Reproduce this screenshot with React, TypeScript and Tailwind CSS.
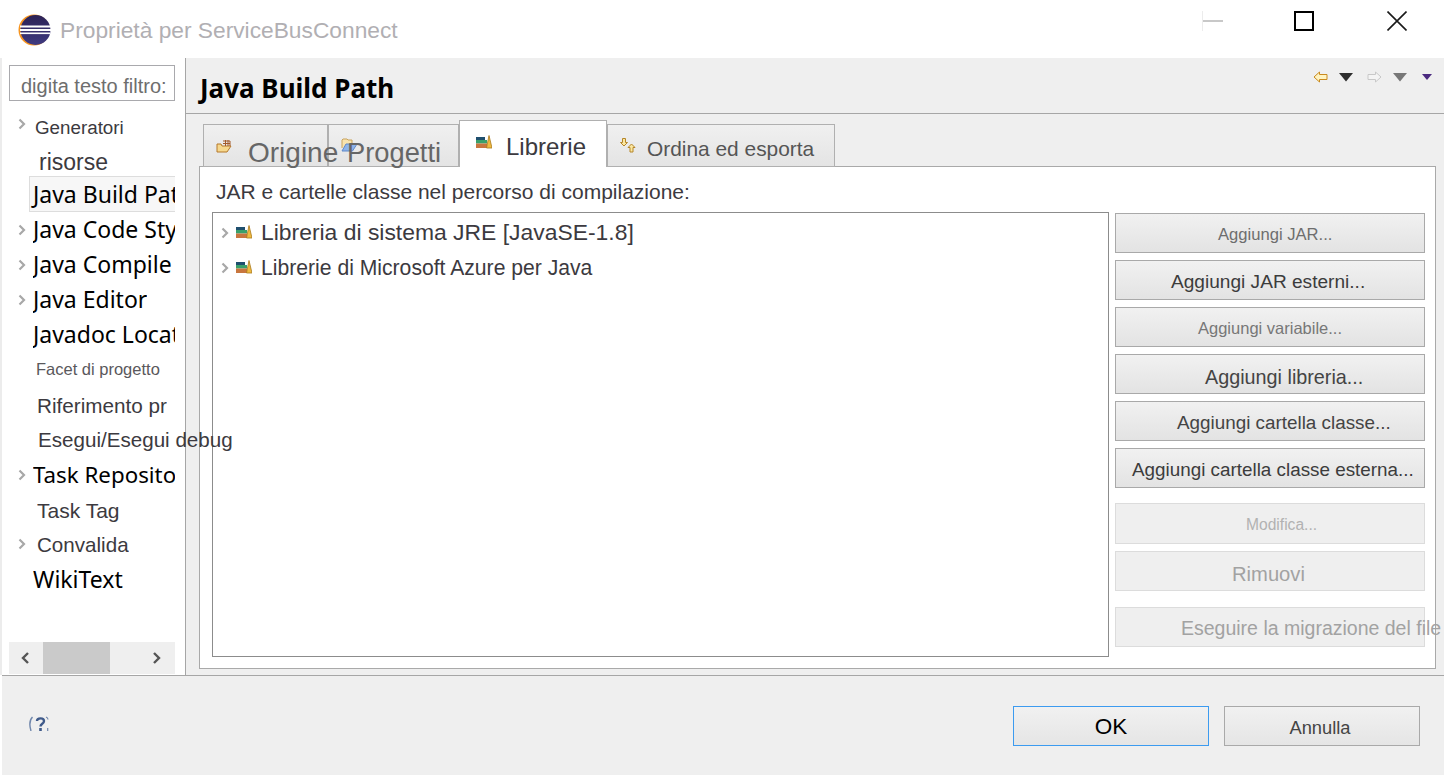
import React from 'react';

const arial = "font-['Liberation_Sans',Arial,sans-serif]";
const segoe = "font-['Noto_Sans','Open_Sans',sans-serif]";

function Chevron({ className = '' }: { className?: string }) {
  return (
    <svg width="8" height="12" viewBox="0 0 8 12" className={className}>
      <path d="M1.5 1.5 L6 6 L1.5 10.5" fill="none" stroke="#a8a8a8" strokeWidth="2.2" />
    </svg>
  );
}

function BooksIcon() {
  return (
    <svg width="16" height="14" viewBox="0 0 16 14">
      <rect x="0" y="2" width="9" height="3" fill="#1f4f6e" />
      <rect x="0" y="5" width="11" height="3.5" fill="#3aa06a" />
      <rect x="0" y="8.5" width="11" height="4.5" fill="#c8763e" />
      <path d="M10.5 13 L13 0.5 L16 13 Z" fill="#f0bb3f" stroke="#a9781c" strokeWidth="0.8" />
    </svg>
  );
}

function SourceFolderIcon() {
  return (
    <svg width="16" height="13" viewBox="0 0 16 13">
      <path d="M1 4 L1 12 L11 12 L15 6 L6 6 L5 4 Z" fill="#f6d88e" stroke="#b5792a" strokeWidth="1" />
      <path d="M7 1 H14 V6 M9.5 0 V6 M12 0 V6 M7 3.5 H14" fill="none" stroke="#a35a2a" strokeWidth="1" />
    </svg>
  );
}

function ProjectIcon() {
  return (
    <svg width="16" height="14" viewBox="0 0 16 14">
      <path d="M1 10 V2 L2 1 H6 L7 2 H11 V5" fill="#f8e3ae" stroke="#c9a35c" strokeWidth="1" />
      <path d="M1 13 L5 6 H16 L11.5 13 Z" fill="#8fb4ea" stroke="#5f88c9" strokeWidth="1" />
    </svg>
  );
}

function OrderIcon() {
  return (
    <svg width="16" height="15" viewBox="0 0 16 15">
      <path d="M2.5 0.5 H5.5 V4.5 H7.5 L4 8 L0.5 4.5 H2.5 Z" fill="#fbe7a1" stroke="#b5862a" strokeWidth="1" />
      <path d="M11.5 6 L15 9.5 H13 V14 H10 V9.5 H8 Z" fill="#fbe7a1" stroke="#b5862a" strokeWidth="1" />
    </svg>
  );
}

function HelpIcon() {
  return (
    <svg width="20" height="15" viewBox="0 0 20 15">
      <path d="M3.5 1 C0.5 4 0.5 10 2 15" fill="none" stroke="#6f86ab" strokeWidth="1.4" />
      <path d="M17 1 C18.5 1.5 19 2 19 3.5" fill="none" stroke="#6f86ab" strokeWidth="1.2" />
      <path d="M18.7 12 V15" fill="none" stroke="#6f86ab" strokeWidth="1.2" />
      <path d="M8 5 C8 1.5 15 1.5 15 5 C15 8 11.5 7.5 11.5 10.5" fill="none" stroke="#3f5a8a" strokeWidth="2.4" />
      <rect x="10.2" y="12" width="2.6" height="3" fill="#3f5a8a" />
    </svg>
  );
}

function EclipseLogo() {
  return (
    <svg width="33" height="32" viewBox="0 0 33 32">
      <defs>
        <linearGradient id="disc" x1="0" y1="0" x2="0" y2="1">
          <stop offset="0" stopColor="#2c2255" />
          <stop offset="1" stopColor="#3f3a80" />
        </linearGradient>
      </defs>
      <circle cx="16" cy="16" r="15.5" fill="#f7941e" />
      <circle cx="17.5" cy="16" r="15" fill="url(#disc)" />
      <rect x="2" y="11.5" width="31" height="2" fill="#ffffff" />
      <rect x="2" y="15" width="31" height="2" fill="#ffffff" />
      <rect x="2" y="18.5" width="30" height="1.6" fill="#ffffff" />
    </svg>
  );
}

interface SideRowProps {
  label: string;
  left: string;
  text: string;
  chevron?: string;
  clip?: boolean;
}

function SideRow({ label, left, text, chevron, clip = true }: SideRowProps) {
  return (
    <div className={`relative flex h-[35px] w-[166px] shrink-0 items-center ${left}`}>
      {chevron && <Chevron className={`absolute left-[9px] ${chevron}`} />}
      <span className={`whitespace-nowrap ${text} ${clip ? 'overflow-hidden' : 'relative z-10'}`}>{label}</span>
    </div>
  );
}

interface TabProps {
  label: string;
  icon: React.ReactNode;
  className: string;
  iconTop: string;
  textClass: string;
}

function Tab({ label, icon, className, iconTop, textClass }: TabProps) {
  return (
    <div
      className={`flex shrink-0 border border-[#b0b0b0] bg-gradient-to-b from-[#f0f0f0] to-[#e4e4e4] ${className}`}
    >
      <div className={`pl-[12px] ${iconTop}`}>{icon}</div>
      <span className={`relative z-10 whitespace-nowrap ${arial} ${textClass}`}>{label}</span>
    </div>
  );
}

function ActionButton({ label, text, disabled, margin = '' }: { label: string; text: string; disabled?: boolean; margin?: string }) {
  return (
    <div
      className={`flex w-[310px] shrink-0 items-center border ${margin} ${
        disabled
          ? 'border-[#dcdcdc] bg-[#efefef]'
          : 'border-[#a9a9a9] bg-gradient-to-b from-[#f1f1f1] to-[#e3e3e3]'
      }`}
    >
      <span className={`whitespace-nowrap ${arial} ${text}`}>{label}</span>
    </div>
  );
}

export default function App() {
  return (
    <div className={`flex h-[777px] w-[1446px] flex-col overflow-hidden bg-white ${arial}`}>
      {/* Title bar */}
      <div className="flex h-[58px] shrink-0 items-start bg-white">
        <div className="ml-[18px] mt-[14px]">
          <EclipseLogo />
        </div>
        <span className="ml-[9px] mt-[15px] text-[22.75px] leading-[30px] text-[#b1afb3]">Proprietà per ServiceBusConnect</span>
        <div className="ml-auto flex items-start">
          <div className="mt-[11px] h-[20px] w-[23px] border-l border-[#ececec]">
            <div className="mt-[9px] h-[2px] w-[20px] bg-[#c8c8c8]" />
          </div>
          <div className="ml-[69px] mt-[11px] h-[20px] w-[20px] border-2 border-black" />
          <svg width="20" height="20" viewBox="0 0 20 20" className="ml-[73px] mr-[39px] mt-[11px]">
            <path d="M0.5 0.5 L19.5 19.5 M19.5 0.5 L0.5 19.5" stroke="#1a1a1a" strokeWidth="1.6" />
          </svg>
        </div>
      </div>

      {/* Body */}
      <div className="mr-[2px] flex h-[617px] shrink-0 border-l-2 border-[#ececec]">
        {/* Sidebar */}
        <div className="flex w-[184px] shrink-0 flex-col border-r border-[#a6a6a6] bg-white pl-[7px]">
          <div className="mt-[7px] flex h-[36px] w-[166px] shrink-0 items-center border border-[#a9a9ad] pl-[11px] pt-[6px] text-[20px] leading-[24px] text-[#6e6e6e]">
            digita testo filtro:
          </div>
          <div className="mt-[9px] flex flex-1 flex-col">
            <SideRow label="Generatori" left="pl-[26px] pt-[2px]" text={`${arial} text-[18.8px] text-[#3c3a40]`} chevron="top-[8px]" />
            <div className="flex h-[32px] w-[166px] shrink-0 items-center pl-[30px] pt-[3px] text-[23px] text-[#3c3a40]">risorse</div>
            <div className="-mt-px ml-[20px] flex h-[36px] w-[146px] shrink-0 items-center overflow-hidden border-y border-l border-[#dddddd] bg-[#f7f7f7] pl-[3px] pt-px">
              <span className={`whitespace-nowrap text-[23px] text-black ${segoe}`}>Java Build Path</span>
            </div>
            <SideRow label="Java Code Style" left="pl-[24px]" text={`${segoe} text-[23px] text-black`} chevron="top-[12px]" />
            <SideRow label="Java Compile" left="pl-[24px]" text={`${segoe} text-[23px] text-black`} chevron="top-[12px]" />
            <SideRow label="Java Editor" left="pl-[24px]" text={`${segoe} text-[23px] text-black`} chevron="top-[12px]" />
            <SideRow label="Javadoc Location" left="pl-[24px]" text={`${segoe} text-[23px] text-black`} />
            <SideRow label="Facet di progetto" left="pl-[27px]" text={`${arial} text-[16.5px] text-[#5a585c]`} />
            <SideRow label="Riferimento pr" left="pl-[28px] pt-[2px]" text={`${arial} text-[20.7px] text-[#3c3a40]`} />
            <SideRow label="Esegui/Esegui debug" left="pl-[29px] pt-[2px]" clip={false} text={`${arial} text-[20.6px] text-[#3c3a40]`} />
            <SideRow label="Task Repository" left="pl-[24px]" text={`${segoe} text-[22.3px] text-black`} chevron="top-[12px]" />
            <SideRow label="Task Tag" left="pl-[28px] pt-[2px]" text={`${arial} text-[21px] text-[#3c3a40]`} />
            <SideRow label="Convalida" left="pl-[28px] pt-[2px]" text={`${arial} text-[20.6px] text-[#3c3a40]`} chevron="top-[11px]" />
            <SideRow label="WikiText" left="pl-[24px]" text={`${segoe} text-[23px] text-black`} />
          </div>
          {/* Horizontal scrollbar */}
          <div className="mb-[1px] flex h-[32px] w-[166px] shrink-0 items-center bg-[#efefef]">
            <svg width="10" height="14" viewBox="0 0 10 14" className="ml-[11px]">
              <path d="M8 2 L3 7 L8 12" fill="none" stroke="#555555" strokeWidth="2.4" />
            </svg>
            <div className="ml-[13px] h-[32px] w-[67px] bg-[#cacaca]" />
            <svg width="10" height="14" viewBox="0 0 10 14" className="ml-[42px]">
              <path d="M2 2 L7 7 L2 12" fill="none" stroke="#555555" strokeWidth="2.4" />
            </svg>
          </div>
        </div>

        {/* Main area */}
        <div className="flex min-w-0 flex-1 flex-col bg-[#efefef]">
          <div className="flex h-[56px] shrink-0 border-b border-[#a6a6a6]">
            <span className={`ml-[14px] mt-[12px] text-[26px] font-bold leading-[36px] text-black ${segoe}`}>Java Build Path</span>
            <div className="ml-auto mr-[12px] mt-[14px] flex h-[10px] items-center">
              <svg width="15" height="12" viewBox="0 0 15 12">
                <path d="M1 6 L6.5 1 V3.5 H14 V8.5 H6.5 V11 Z" fill="#fff3c0" stroke="#c98a1e" strokeWidth="1" />
              </svg>
              <svg width="14" height="9" viewBox="0 0 14 9" className="ml-[11px]">
                <path d="M0 0 H14 L7 8.5 Z" fill="#2e2e2e" />
              </svg>
              <svg width="15" height="12" viewBox="0 0 15 12" className="ml-[14px]">
                <path d="M14 6 L8.5 1 V3.5 H1 V8.5 H8.5 V11 Z" fill="#f4f4f4" stroke="#c8c8c8" strokeWidth="1" />
              </svg>
              <svg width="14" height="9" viewBox="0 0 14 9" className="ml-[11px]">
                <path d="M0 0 H14 L7 8.5 Z" fill="#777777" />
              </svg>
              <svg width="10" height="6" viewBox="0 0 10 6" className="ml-[15px]">
                <path d="M0 0 H10 L5 6 Z" fill="#4b2a80" />
              </svg>
            </div>
          </div>

          <div className="ml-[13px] mr-[8px] flex h-[555px] flex-col">
            {/* Tabs */}
            <div className="relative z-10 -mb-px flex h-[53px] shrink-0 items-end pl-[4px]">
              <Tab
                label="Origine"
                icon={<SourceFolderIcon />}
                className="h-[43px] w-[125px]"
                iconTop="pt-[15px]"
                textClass="ml-[16px] mt-[10px] text-[28px] leading-[36px] text-[#666666]"
              />
              <Tab
                label="Progetti"
                icon={<ProjectIcon />}
                className="h-[43px] w-[131px]"
                iconTop="pt-[13px]"
                textClass="ml-[-10px] mt-[10px] text-[27.3px] leading-[36px] text-[#666666]"
              />
              <div className="flex h-[47px] w-[148px] shrink-0 border border-b-0 border-[#b0b0b0] bg-white">
                <div className="pl-[16px] pt-[14px]">
                  <BooksIcon />
                </div>
                <span className="ml-[14px] mt-[10px] text-[24px] leading-[32px] text-[#3c3a40]">Librerie</span>
              </div>
              <Tab
                label="Ordina ed esporta"
                icon={<OrderIcon />}
                className="h-[43px] w-[228px]"
                iconTop="pt-[13px]"
                textClass="ml-[11px] mt-[10px] text-[20.9px] leading-[28px] text-[#555555]"
              />
            </div>

            {/* Panel */}
            <div className="flex flex-1 flex-col border border-[#a9a9a9] bg-white pl-[12px]">
              <span className="ml-[4px] mt-[12px] h-[33px] shrink-0 text-[21px] leading-[26px] text-[#3c3a40]">
                JAR e cartelle classe nel percorso di compilazione:
              </span>
              <div className="flex flex-1">
                <div className="flex h-[445px] w-[897px] shrink-0 flex-col border border-[#8c8c8c] pt-[2px]">
                  <div className="flex h-[35px] items-center pl-[8px]">
                    <Chevron />
                    <div className="mb-[2px] ml-[7px]">
                      <BooksIcon />
                    </div>
                    <span className="ml-[9px] text-[22.9px] text-[#3c3a40]">Libreria di sistema JRE [JavaSE-1.8]</span>
                  </div>
                  <div className="flex h-[35px] items-center pl-[8px]">
                    <Chevron />
                    <div className="mb-[2px] ml-[7px]">
                      <BooksIcon />
                    </div>
                    <span className="ml-[9px] text-[21.15px] text-[#3c3a40]">Librerie di Microsoft Azure per Java</span>
                  </div>
                </div>
                <div className="ml-[6px] flex flex-col">
                  <ActionButton label="Aggiungi JAR..." text="pl-[102px] pt-[4px] text-[16.6px] text-[#6e6e6e]" margin="mt-[1px] h-[40px]" />
                  <ActionButton label="Aggiungi JAR esterni..." text="ml-[55px] pt-[4px] text-[19.1px] text-[#3c3c3c]" margin="mt-[7px] h-[40px]" />
                  <ActionButton label="Aggiungi variabile..." text="ml-[82px] pt-[2px] text-[16.5px] text-[#777777]" margin="mt-[7px] h-[40px]" />
                  <ActionButton label="Aggiungi libreria..." text="ml-[89px] pt-[8px] text-[19.8px] text-[#444444]" margin="mt-[7px] h-[40px]" />
                  <ActionButton label="Aggiungi cartella classe..." text="ml-[61px] pt-[4px] text-[18.85px] text-[#444444]" margin="mt-[7px] h-[40px]" />
                  <ActionButton label="Aggiungi cartella classe esterna..." text="ml-[16px] pt-[4px] text-[18.85px] text-[#3c3c3c]" margin="mt-[7px] h-[40px]" />
                  <ActionButton label="Modifica..." disabled text="ml-[130px] pt-[2px] text-[15.6px] text-[#b2b2b2]" margin="mt-[15px] h-[41px]" />
                  <ActionButton label="Rimuovi" disabled text="ml-[116px] pt-[6px] text-[20.2px] text-[#a2a2a2]" margin="mt-[7px] h-[40px]" />
                  <ActionButton label="Eseguire la migrazione del file" disabled text="ml-[65px] pt-[4px] text-[19.5px] text-[#a2a2a2]" margin="mt-[16px] h-[40px]" />
                </div>
              </div>
            </div>
          </div>
        </div>
      </div>

      {/* Footer */}
      <div className="mx-[2px] flex h-[100px] shrink-0 border-t border-[#a6a6a6] bg-[#efefef]">
        <div className="ml-[27px] mt-[40px]">
          <HelpIcon />
        </div>
        <div className="ml-auto mr-[24px] mt-[30px] flex gap-[15px]">
          <div className="flex h-[40px] w-[196px] items-center justify-center border border-[#3c9bf0] bg-gradient-to-b from-[#f1f1f1] to-[#e5e5e5] pt-[2px] text-[22.5px] text-black">
            OK
          </div>
          <div className="flex h-[40px] w-[196px] items-center justify-center border border-[#a9a9a9] bg-gradient-to-b from-[#f1f1f1] to-[#e5e5e5] pr-[4px] pt-[4px] text-[18.3px] text-[#444444]">
            Annulla
          </div>
        </div>
      </div>
    </div>
  );
}
